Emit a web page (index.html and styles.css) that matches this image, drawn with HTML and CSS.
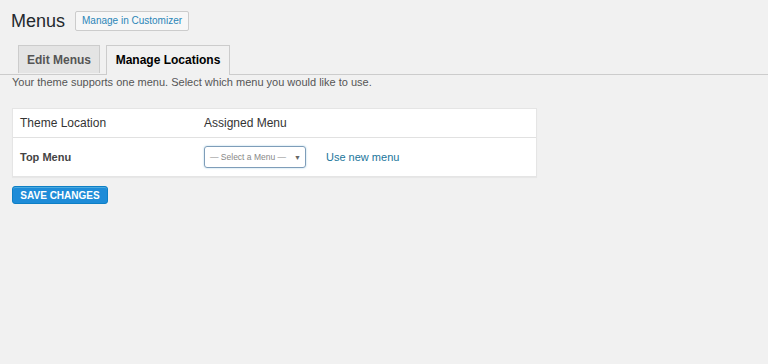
FILE: index.html
```html
<!DOCTYPE html>
<html lang="en">
<head>
    <meta charset="UTF-8">
    <meta name="viewport" content="width=device-width, initial-scale=1.0">
    <title>Menus</title>
    <link rel="stylesheet" href="styles.css">
</head>
<body>
    <div class="wrap">
        <div class="title-row">
            <h1>Menus</h1>
            <a href="#" class="title-btn">Manage in Customizer</a>
        </div>

        <div class="tabs">
            <a href="#" class="tab">Edit Menus</a>
            <a href="#" class="tab active">Manage Locations</a>
        </div>

        <p class="desc">Your theme supports one menu. Select which menu you would like to use.</p>

        <div class="locations">
            <div class="loc-row loc-head">
                <div class="col-name">Theme Location</div>
                <div class="col-menu">Assigned Menu</div>
            </div>
            <div class="loc-row">
                <div class="col-name"><strong>Top Menu</strong></div>
                <div class="col-menu">
                    <div class="select">
                        <span>— Select a Menu —</span>
                        <span class="arrow">▼</span>
                    </div>
                    <a href="#" class="new-menu">Use new menu</a>
                </div>
            </div>
        </div>

        <button class="save-btn">SAVE CHANGES</button>
    </div>
</body>
</html>
```

FILE: styles.css
```css
body {
    font-family: 'Liberation Sans', Arial, sans-serif;
    margin: 0;
    padding: 0;
    background: #f1f1f1;
    color: #444;
    height: 364px;
}

.wrap {
    padding: 0 0 0 12px;
}

.title-row {
    display: flex;
    align-items: center;
    gap: 10px;
    padding-top: 11px;
    margin-left: -1px;
}

h1 {
    font-size: 18px;
    font-weight: normal;
    color: #23282d;
    margin: 0;
    line-height: 20px;
}

.title-btn {
    display: inline-block;
    box-sizing: border-box;
    white-space: nowrap;
    font-size: 10px;
    color: #2b86b8;
    text-decoration: none;
    background: #f7f7f7;
    border: 1px solid #ccc;
    border-radius: 2px;
    line-height: 18px;
    width: 114px;
    text-align: center;
}

.tabs {
    display: flex;
    gap: 6px;
    margin-top: 14px;
    margin-left: -12px;
    padding-left: 18px;
    border-bottom: 1px solid #ccc;
    height: 29px;
}

.tab {
    display: block;
    box-sizing: border-box;
    white-space: nowrap;
    font-size: 12px;
    font-weight: bold;
    color: #555;
    text-decoration: none;
    background: #e4e4e4;
    border: 1px solid #ccc;
    border-bottom: none;
    line-height: 28px;
    height: 28px;
    width: 82px;
    text-align: center;
}

.tab.active {
    background: #f1f1f1;
    color: #000;
    height: 30px;
    width: 124px;
}

.desc {
    font-size: 11px;
    color: #555;
    margin: 0;
    line-height: 14px;
}

.locations {
    width: 523px;
    margin-top: 19px;
    background: #fff;
    border: 1px solid #e5e5e5;
    box-shadow: 0 1px 1px rgba(0, 0, 0, 0.04);
}

.loc-row {
    display: flex;
    align-items: center;
    height: 38px;
    font-size: 12px;
    color: #333;
}

.loc-row.loc-head {
    height: 28px;
    border-bottom: 1px solid #e1e1e1;
}

.col-name {
    width: 184px;
    padding-left: 7px;
}

.col-name strong {
    font-size: 11px;
    color: #444;
}

.col-menu {
    display: flex;
    align-items: center;
    gap: 20px;
}

.select {
    display: flex;
    justify-content: space-between;
    align-items: center;
    box-sizing: border-box;
    width: 102px;
    height: 22px;
    border: 1px solid #7e9db9;
    border-radius: 3px;
    box-shadow: 0 0 2px rgba(30, 140, 190, 0.4);
    font-size: 8.5px;
    color: #888;
    padding: 0 4px 0 5px;
}

.select .arrow {
    font-size: 7px;
    color: #666;
}

.new-menu {
    color: #21759b;
    text-decoration: none;
    font-size: 11px;
}

.save-btn {
    display: block;
    margin-top: 9px;
    width: 96px;
    height: 18px;
    padding: 0;
    border: 1px solid #0e7fc5;
    border-radius: 3px;
    background: #1e8cd8;
    color: #fff;
    font-family: 'Liberation Sans', Arial, sans-serif;
    font-size: 10px;
    font-weight: bold;
    box-shadow: inset 0 1px 0 rgba(120, 200, 230, 0.5);
}
```
